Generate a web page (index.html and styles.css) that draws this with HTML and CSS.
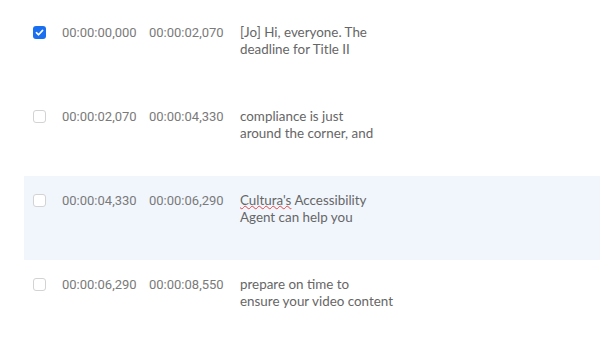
FILE: index.html
```html
<!DOCTYPE html>
<html lang="en">
<head>
    <meta charset="UTF-8">
    <title>Subtitles</title>
    <link rel="stylesheet" href="styles.css">
</head>
<body>
<div class="wrap">
    <ul class="list">
        <li class="row">
            <span class="box on"><svg viewBox="0 0 13 13" width="13" height="13"><path d="M3.4 6.7 L5.6 8.8 L9.6 4.4" fill="none" stroke="#fff" stroke-width="1.6" stroke-linecap="round" stroke-linejoin="round"/></svg></span>
            <span class="time">00:00:00,000</span>
            <span class="time">00:00:02,070</span>
            <p class="txt">[Jo] Hi, everyone. The<br>deadline for Title II</p>
        </li>
        <li class="row">
            <span class="box"></span>
            <span class="time">00:00:02,070</span>
            <span class="time">00:00:04,330</span>
            <p class="txt">compliance is just<br>around the corner, and</p>
        </li>
        <li class="row active">
            <span class="box"></span>
            <span class="time">00:00:04,330</span>
            <span class="time">00:00:06,290</span>
            <p class="txt"><span class="spell">Cultura's</span> Accessibility<br>Agent can help you</p>
        </li>
        <li class="row">
            <span class="box"></span>
            <span class="time">00:00:06,290</span>
            <span class="time">00:00:08,550</span>
            <p class="txt">prepare on time to<br>ensure your video content</p>
        </li>
    </ul>
</div>
</body>
</html>
```

FILE: styles.css
```css
*{ margin: 0; padding: 0; }
ul,ol{ list-style: none; }
body{
    background: #fff;
    font-family: "Lato", "Noto Sans", sans-serif;
    overflow: hidden;
}
.wrap{
    padding: 8px 0 0 24px;
}
.row{
    display: flex;
    align-items: flex-start;
    height: 84px;
    padding: 16px 0 0 9px;
    box-sizing: border-box;
}
.row.active{
    background: #f1f6fd;
}
.box{
    flex: none;
    width: 13px;
    height: 13px;
    margin-top: 2px;
    margin-right: 16px;
    border: 1px solid #d3d3d3;
    border-radius: 3px;
    box-sizing: border-box;
    background: #fff;
}
.box.on{
    border: none;
    background: #1a6ef0;
}
.box svg{ display: block; }
.time{
    flex: none;
    width: 87px;
    font-family: "Roboto", sans-serif;
    font-size: 13px;
    line-height: 17px;
    color: #7a7a7a;
}
.txt{
    margin-left: 4px;
    font-size: 13.4px;
    line-height: 17px;
    color: #666;
}
.spell{
    text-decoration: underline wavy #e04848;
    text-decoration-thickness: 1px;
    text-underline-offset: 0;
}
```
